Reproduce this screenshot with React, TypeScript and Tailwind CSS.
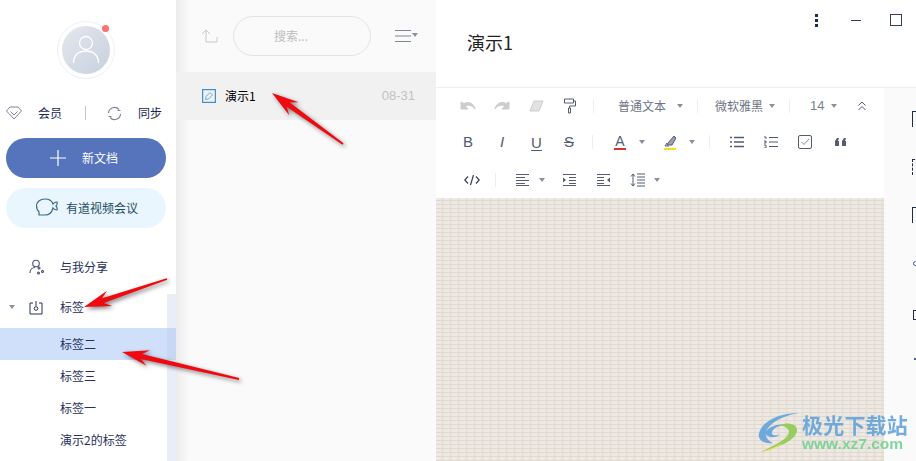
const cjk = "font-['Noto_Sans_CJK_SC','Noto_Sans',sans-serif]"

function Caret({ className = '' }: { className?: string }) {
  return <span className={`inline-block h-0 w-0 shrink-0 border-x-[3.5px] border-t-[4px] border-x-transparent border-t-[#8a90a0] ${className}`} />
}

function Divider({ className = '' }: { className?: string }) {
  return <span className={`h-[14px] w-px shrink-0 bg-[#eceef0] ${className}`} />
}

function Icon({ children, w = 16, h = 16, className = '' }: { children: React.ReactNode; w?: number; h?: number; className?: string }) {
  return (
    <svg width={w} height={h} viewBox={`0 0 ${w} ${h}`} fill="none" stroke="#535c70" strokeWidth="1" className={`shrink-0 ${className}`}>
      {children}
    </svg>
  )
}

function Arrow({ x1, y1, x2, y2 }: { x1: number; y1: number; x2: number; y2: number }) {
  // tail (x1,y1) -> tip (x2,y2)
  const len = Math.hypot(x2 - x1, y2 - y1)
  const dx = (x1 - x2) / len
  const dy = (y1 - y2) / len
  const nx = -dy
  const ny = dx
  const p = (along: number, side: number) => `${x2 + dx * along + nx * side},${y2 + dy * along + ny * side}`
  const points = [p(0, 0), p(27, 8), p(20, 2.6), p(len, 0.9), p(len, -0.9), p(20, -2.6), p(27, -8)].join(' ')
  return <polygon points={points} fill="#f00a10" />
}

function SideItem({ label, active }: { label: string; active?: boolean }) {
  return (
    <div className={`flex h-8 items-center pl-[60px] text-xs text-[#27305c] ${active ? 'bg-[#d0e0fb]' : ''}`}>{label}</div>
  )
}

function Sidebar() {
  return (
    <aside className="relative flex h-full w-[176px] shrink-0 flex-col bg-white">
      <div className="flex justify-center pr-[4px] pt-[21px]">
        <div className="relative flex h-[58px] w-[58px] items-center justify-center rounded-full border border-[#eef0f8]">
          <div className="flex h-[48px] w-[48px] items-center justify-center rounded-full bg-gradient-to-br from-[#e4e8ee] to-[#c8d0de]">
            <svg width="28" height="30" viewBox="0 0 28 30" fill="none" stroke="#fff" strokeWidth="1.3">
              <circle cx="14" cy="8" r="6.500" />
              <path d="M1.500 28c0-8 5.500-12 12.500-12s12.500 4 12.500 12" />
            </svg>
          </div>
          <span className="absolute right-[5px] top-[3px] h-[7px] w-[7px] rounded-full bg-[#ff7070]" />
        </div>
      </div>

      <div className="mt-[26px] flex h-[16px] items-center pl-[6px] text-xs text-[#1d2550]">
        <svg width="16" height="14" viewBox="0 0 16 14" fill="none" stroke="#7d8597" strokeWidth="1">
          <path d="M4 1h8l3.500 4L8 13 .5 5z" />
          <path d="M4.500 5.500 8 9l3.500-3.500" />
        </svg>
        <span className="ml-[16px]">会员</span>
        <span className="ml-[23px] h-[14px] w-px bg-[#c4c6cc]" />
        <svg width="15" height="15" viewBox="0 0 15 15" fill="none" stroke="#7d8597" strokeWidth="1.2" className="ml-[21px]">
          <path d="M1.500 7A6 6 0 0 1 12 3.500" />
          <path d="M13.500 8A6 6 0 0 1 3 11.500" />
          <path d="M13.500 4.500h-3M1.500 10.500h3" />
        </svg>
        <span className="ml-[16px]">同步</span>
      </div>

      <button className="ml-[6px] mr-[10px] mt-[17px] flex h-10 items-center rounded-full bg-[#5574bb] pl-[44px] text-xs text-white">
        <svg width="16" height="16" viewBox="0 0 16 16" stroke="#fff" strokeWidth="1.2">
          <path d="M8 0v16M0 8h16" />
        </svg>
        <span className="ml-[16px]">新文档</span>
      </button>

      <button className="ml-[6px] mr-[10px] mt-[10px] flex h-10 items-center rounded-full bg-[#eaf6fd] pl-[30px] text-xs text-[#1d4a60]">
        <svg width="22" height="20" viewBox="0 0 22 20" fill="none" stroke="#3e6a84" strokeWidth="1.2">
          <path d="M9 1c4 0 7 2 8 5 1-1.500 2.500-2 4-2 .5 1.500 0 3-1 4 1 1 1.500 2.500 1 4-1.500 0-3-.5-4-2-1 4-4 7-8 7H3v-3c-1.500-1.500-2.500-3.500-2.500-6C.5 4 4 1 9 1z" />
        </svg>
        <span className="ml-[8px]">有道视频会议</span>
      </button>

      <div className="mt-[29px] flex h-5 items-center pl-[29px] text-xs text-[#27305c]">
        <svg width="15" height="16" viewBox="0 0 15 16" fill="none" stroke="#4a5272" strokeWidth="1.1">
          <circle cx="7" cy="4.500" r="3.300" />
          <path d="M1 14c0-3.500 2.500-5.500 5-5.500" />
          <circle cx="10" cy="9" r="1" />
          <circle cx="13.500" cy="12.500" r="1" />
          <circle cx="9.500" cy="14" r="1" />
        </svg>
        <span className="ml-[16px]">与我分享</span>
      </div>

      <div className="mt-[20px] flex h-5 items-center pl-[9px] text-xs text-[#27305c]">
        <Caret />
        <svg width="14" height="15" viewBox="0 0 14 15" fill="none" stroke="#27305c" strokeWidth="1" className="ml-[14px]">
          <path d="M4 3H1v11h12V3h-3" />
          <circle cx="7" cy="8.500" r="1.800" />
          <path d="M7 1v5" />
        </svg>
        <span className="ml-[17px]">标签</span>
      </div>

      <div className="mt-[11px]">
        <SideItem label="标签二" active />
        <SideItem label="标签三" />
        <SideItem label="标签一" />
        <SideItem label="演示2的标签" />
      </div>

      <div className="absolute bottom-0 right-0 top-[294px] w-[9px] bg-[#b4c4e6]/30" />
    </aside>
  )
}

function NoteList() {
  return (
    <section className="flex h-full w-[260px] shrink-0 flex-col bg-[#fafafa] bg-gradient-to-r from-[#ececec] from-0% via-[#fafafa] via-[5%] to-[#fafafa]">
      <div className="flex h-[72px] items-center pl-[25px]">
        <svg width="17" height="14" viewBox="0 0 17 14" fill="none" stroke="#c8c8c8" strokeWidth="1">
          <path d="M1 5l4-4 4 4M5 1v12h11V8" />
        </svg>
        <div className="ml-[15px] flex h-10 w-[138px] items-center justify-center rounded-full border border-[#e4e4e4] pr-[22px] text-xs text-[#bdbdbd]">搜索...</div>
        <svg width="16" height="12" viewBox="0 0 16 12" stroke="#7d8597" strokeWidth="1" className="ml-[24px]">
          <path d="M0 .5h16M0 6h16M0 11.500h16" />
        </svg>
        <Caret className="mb-[2px] ml-[1px] border-x-[3px]" />
      </div>
      <div className="flex h-12 items-center bg-[#f1f1f1] pl-[26px] pr-[21px] text-xs">
        <svg width="14" height="14" viewBox="0 0 14 14" fill="none" stroke="#3f8fd2" strokeWidth="1.2">
          <rect x=".6" y=".6" width="12.800" height="12.800" />
          <path d="M3.500 10.500l.5-3 4-4 2.500 2.500-4 4z" stroke="#6aaee0" strokeWidth="1" />
        </svg>
        <span className="ml-[9px] text-black">演示1</span>
        <span className="ml-auto font-['Liberation_Sans',sans-serif] text-[13px] text-[#c2c2c2]">08-31</span>
      </div>
    </section>
  )
}

function Toolbar() {
  const grey = '#cdcdcd'
  return (
    <div className="h-[110px] shrink-0 pl-[24px] text-xs text-[#6d7486]">
      <div className="flex h-[36px] items-center">
        <Icon w={16} h={10}><path d="M1 1v7h7L5.500 5.500C8 3 12 4 15 8 14 3 9-.5 4 2.500z" fill={grey} stroke={grey} /></Icon>
        <Icon w={16} h={10} className="ml-[18px]"><path d="M15 1v7H8l2.500-2.500C8 3 4 4 1 8 2 3 7-.5 12 2.500z" fill={grey} stroke={grey} /></Icon>
        <Icon w={15} h={12} className="ml-[19px]"><path d="M5 1h9l-4 10H1z" fill="#e2e2e2" stroke={grey} /></Icon>
        <Icon w={12} h={16} className="ml-[20px]"><path d="M.5 1h9v4h-9zM9.500 3H11.500v5H5.500v2M4.500 10h2v5h-2z" /></Icon>
        <Divider className="ml-[17px]" />
        <span className="ml-[24px] w-[48px] shrink-0">普通文本</span>
        <Caret className="ml-[11px]" />
        <Divider className="ml-[14px]" />
        <span className="ml-[17px] w-[48px] shrink-0">微软雅黑</span>
        <Caret className="ml-[6px]" />
        <Divider className="ml-[14px]" />
        <span className="ml-[20px] w-[14px] shrink-0 font-['Liberation_Sans',sans-serif] text-[13px] text-[#78808f]">14</span>
        <Caret className="ml-[7px]" />
        <Icon w={8} h={10} className="ml-[21px]"><path d="M.5 4.500 4 1l3.500 3.500M.5 9 4 5.500 7.500 9" /></Icon>
      </div>

      <div className="flex h-[36px] items-center font-['Liberation_Sans',sans-serif] text-[15px] text-[#535c70]">
        <span className="ml-[3px] w-[10px] text-center">B</span>
        <span className="ml-[24px] w-[10px] text-center italic">I</span>
        <span className="ml-[24px] w-[11px] text-center leading-[13px] underline underline-offset-2">U</span>
        <span className="ml-[21px] w-[12px] text-center line-through">S</span>
        <Divider className="ml-[17px]" />
        <span className="relative ml-[21px] h-[16px] w-[12px] text-center text-[14px] leading-[14px]">
          A
          <span className="absolute bottom-0 left-0 h-[2px] w-full bg-[#d8352a]" />
        </span>
        <Caret className="ml-[13px]" />
        <span className="relative ml-[19px] h-[16px] w-[12px]">
          <Icon w={12} h={13}><path d="M4 9l6-7 2 2-4 7H3z" fill="#9aa0ae" /><path d="M3 9 1 12h4" /></Icon>
          <span className="absolute bottom-0 left-0 h-[2px] w-full bg-[#f5dc14]" />
        </span>
        <Caret className="ml-[13px]" />
        <Divider className="ml-[14px]" />
        <Icon w={14} h={12} className="ml-[20px]"><path d="M4 1.500h10M4 6h10M4 10.500h10M0 1.500h2M0 6h2M0 10.500h2" strokeWidth="1.300" /></Icon>
        <Icon w={14} h={12} className="ml-[20px]"><path d="M5 1.500h9M5 6h9M5 10.500h9M0 1h2v2M0 5h2v2H0M0 9h2v3H0" /></Icon>
        <Icon w={14} h={14} className="ml-[20px]"><rect x=".5" y=".5" width="13" height="13" rx="1.500" /><path d="M3.500 7 6 9.500 11 4" stroke="#8a90a0" /></Icon>
        <Icon w={11} h={8} className="ml-[23px]"><path d="M0 8V3l2-3h2L3 3h1v5zM7 8V3l2-3h2l-1 3h1v5z" fill="#535c70" stroke="none" /></Icon>
      </div>

      <div className="flex h-[38px] items-center pt-[2px]">
        <Icon w={16} h={12} className="ml-[4px]"><path d="M4 2.500.8 6 4 9.500M12 2.500 15.200 6 12 9.500M9.500 1l-3 10" stroke="#3a4152" strokeWidth="1.200" /></Icon>
        <Divider className="ml-[15px]" />
        <Icon w={13} h={12} className="ml-[20px]"><path d="M0 .5h13M0 3.500h9M0 6.500h13M0 9.500h9M0 11.500h13" /></Icon>
        <Caret className="ml-[10px]" />
        <Icon w={13} h={12} className="ml-[18px]"><path d="M0 .5h13M6 3.500h7M6 6.500h7M6 9.500h7M0 11.500h13" /><path d="M0 3.500v5l3-2.500z" fill="#535c70" stroke="none" /></Icon>
        <Icon w={13} h={12} className="ml-[21px]"><path d="M0 .5h13M0 3.500h7M0 6.500h7M0 9.500h7M0 11.500h13" /><path d="M13 3.500v5l-3-2.500z" fill="#535c70" stroke="none" /></Icon>
        <Icon w={15} h={14} className="ml-[20px]"><path d="M3 1v12M1 3.500 3 1l2 2.500M1 10.500 3 13l2-2.500M7 1h8M7 4h8M7 7h8M7 10h8M7 13h8" /></Icon>
        <Caret className="ml-[9px]" />
      </div>
    </div>
  )
}

function Editor() {
  return (
    <main className="flex h-full min-w-0 flex-1 flex-col bg-white">
      <div className="flex h-[88px] shrink-0 border-b border-[#eeeeee]">
        <h1 className="pl-[31px] pt-[29px] text-[18px] font-normal leading-[27px] text-[#222]">演示1</h1>
        <div className="ml-auto flex h-fit items-center pr-[14px] pt-[14px]">
          <span className="flex w-[3px] flex-col gap-[2.500px]">
            <i className="h-[2.500px] w-[2.500px] bg-[#1f2a50]" />
            <i className="h-[2.500px] w-[2.500px] bg-[#1f2a50]" />
            <i className="h-[2.500px] w-[2.500px] bg-[#1f2a50]" />
          </span>
          <span className="ml-[33px] h-px w-[10px] bg-[#33415c]" />
          <span className="ml-[29px] h-[12px] w-[12px] border border-[#33415c]" />
        </div>
      </div>

      <div className="flex min-h-0 flex-1">
        <div className="flex w-[448px] shrink-0 flex-col">
          <Toolbar />
          <div className="flex-1 bg-[#e7e2da] bg-[repeating-linear-gradient(0deg,#dfd9d0_0px,#dfd9d0_1px,transparent_1px,transparent_4px),repeating-linear-gradient(90deg,#eeeae3_0px,#eeeae3_5px,transparent_5px,transparent_8px)]" />
        </div>
        <div className="relative flex-1 bg-[#fafafa]">
          <div className="absolute left-[28px] top-[23px] h-[16px] w-[8px] border-l border-t border-[#1f2a50]" />
          <div className="absolute left-[28px] top-[71px] h-[16px] w-[8px] border-l border-t border-dashed border-[#1f2a50]" />
          <div className="absolute left-[28px] top-[119px] h-[16px] w-[8px] border-l border-t border-[#1f2a50]" />
          <div className="absolute left-[29px] top-[173px] h-[5px] w-[5px] rounded-full border border-[#4a5a8a]" />
          <div className="absolute left-[29px] top-[222px] h-[10px] w-[8px] border-b border-l border-t border-[#1f2a50]" />
          <div className="absolute left-[30px] top-[270px] h-[2px] w-[2px] bg-[#4a5a8a]" />
        </div>
      </div>
    </main>
  )
}

function Watermark() {
  return (
    <div className="absolute bottom-[8px] left-[757px] flex items-center opacity-85">
      <svg width="44" height="42" viewBox="0 0 44 42" fill="none">
        <path d="M42 2C26 2 6 8 2 22c-2 8 6 11 14 10C9 29 7 23 11 17 17 9 30 4 42 2z" fill="#5b9fdc" />
        <path d="M8 22c3-7 14-10 22-8-6 0-13 2-15 7-1 4 5 4 8 2-3 4-12 5-15-1z" fill="#5b9fdc" />
        <path d="M22 14c8-3 18-2 18 5 0 9-16 17-36 22 14-7 27-13 28-20 0-4-5-6-10-7z" fill="#8cc84b" />
        <path d="M4 41c8-2 15-5 21-9-4 5-12 8-21 9z" fill="#ece24a" />
      </svg>
      <div className="ml-[1px] flex flex-col">
        <div className="text-[21px] font-bold leading-[22px] tracking-[0.2px] text-[#5b9fdc]">极光下载站</div>
        <div className="font-['Liberation_Sans',sans-serif] text-[15.500px] font-bold leading-[17px] text-[#6fcf8f]">www.xz7.com</div>
      </div>
    </div>
  )
}

export default function App() {
  return (
    <div className={`relative flex h-[461px] w-[916px] overflow-hidden bg-white ${cjk}`}>
      <Sidebar />
      <NoteList />
      <Editor />
      <Watermark />
      <svg width="916" height="461" className="pointer-events-none absolute inset-0 drop-shadow-[2px_2px_2px_rgba(0,0,0,0.5)]">
        <Arrow x1={343} y1={144} x2={272} y2={93} />
        <Arrow x1={167} y1={279} x2={84} y2={307} />
        <Arrow x1={239} y1={379} x2={122} y2={352} />
      </svg>
    </div>
  )
}
